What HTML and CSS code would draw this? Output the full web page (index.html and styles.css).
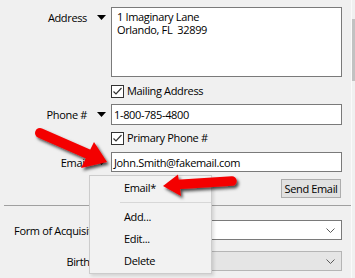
FILE: index.html
```html
<!DOCTYPE html>
<html>
<head>
<meta charset="utf-8">
<link rel="stylesheet" href="styles.css">
</head>
<body>
<div class="page">
  <div class="content">
    <div class="row row-address">
      <div class="label label-top">Address</div>
      <div class="drop drop-top"><svg class="tri" width="9" height="5" viewBox="0 0 9 5"><path d="M0 0H9L4.5 5Z"/></svg></div>
      <div class="field"><div class="textarea">1 Imaginary Lane
Orlando, FL  32899</div></div>
    </div>
    <div class="row row-check row-mailing">
      <div class="label"></div>
      <div class="drop"></div>
      <div class="field check">
        <svg class="box" width="13" height="13" viewBox="0 0 13 13"><rect x="0.5" y="0.5" width="12" height="12" fill="#fff" stroke="#333"/><path d="M2.5 6.5L5 9L10.5 3" fill="none" stroke="#333" stroke-width="1.2"/></svg>
        <span>Mailing Address</span>
      </div>
    </div>
    <div class="row row-phone">
      <div class="label">Phone #</div>
      <div class="drop"><svg class="tri" width="9" height="5" viewBox="0 0 9 5"><path d="M0 0H9L4.5 5Z"/></svg></div>
      <div class="field"><div class="input input-phone">1-800-785-4800</div></div>
    </div>
    <div class="row row-check row-primary">
      <div class="label"></div>
      <div class="drop"></div>
      <div class="field check">
        <svg class="box" width="13" height="13" viewBox="0 0 13 13"><rect x="0.5" y="0.5" width="12" height="12" fill="#fff" stroke="#333"/><path d="M2.5 6.5L5 9L10.5 3" fill="none" stroke="#333" stroke-width="1.2"/></svg>
        <span>Primary Phone #</span>
      </div>
    </div>
    <div class="row row-email">
      <div class="label">Email</div>
      <div class="drop"><svg class="tri" width="9" height="5" viewBox="0 0 9 5"><path d="M0 0H9L4.5 5Z"/></svg></div>
      <div class="field"><div class="input input-email">John.Smith@fakemail.com</div></div>
    </div>
    <div class="row row-send">
      <div class="label"></div>
      <div class="drop"></div>
      <div class="field field-end"><div class="button">Send Email</div></div>
    </div>
    <div class="separator"></div>
    <div class="row row-combo row-form">
      <div class="label label-wide">Form of Acquisition</div>
      <div class="combo">
        <svg class="chev" width="9" height="5" viewBox="0 0 9 5"><path d="M0.5 0.5L4.5 4.5L8.5 0.5" fill="none" stroke="#5a5a5a"/></svg>
      </div>
    </div>
    <div class="row row-combo row-birthday">
      <div class="label label-wide">Birthday</div>
      <div class="combo combo-disabled">
        <svg class="chev" width="9" height="5" viewBox="0 0 9 5"><path d="M0.5 0.5L4.5 4.5L8.5 0.5" fill="none" stroke="#5a5a5a"/></svg>
      </div>
    </div>
  </div>
  <div class="scrollbar"><div class="thumb"></div></div>

  <div class="menu">
    <div class="menu-item">Email*</div>
    <div class="menu-sep"></div>
    <div class="menu-item">Add...</div>
    <div class="menu-item">Edit...</div>
    <div class="menu-item">Delete</div>
  </div>

  <svg class="annot" width="355" height="278" viewBox="0 0 355 278">
    <defs>
      <filter id="sh" x="-20%" y="-20%" width="150%" height="160%">
        <feDropShadow dx="2" dy="2.5" stdDeviation="1.4" flood-color="#000" flood-opacity="0.7"/>
      </filter>
    </defs>
    <g filter="url(#sh)" fill="#f40000">
      <path d="M40 133L88 154" stroke="#f40000" stroke-width="10" stroke-linecap="round"/>
      <path d="M107 162L94 142L81 168Z"/>
      <path d="M232 181L177 184.5" stroke="#f40000" stroke-width="9.5" stroke-linecap="round"/>
      <path d="M163 186L178 174.5L181 196Z"/>
    </g>
  </svg>
</div>
</body>
</html>
```
FILE: styles.css
```css
html, body {
  margin: 0;
  padding: 0;
}
body {
  background: #f0f0f0;
  font-family: "Open Sans", "Noto Sans", sans-serif;
  font-size: 11px;
  letter-spacing: -0.35px;
  color: #000;
}
.page {
  position: relative;
  width: 355px;
  height: 278px;
  overflow: hidden;
  display: flex;
}
.content {
  width: 351px;
  flex: none;
  padding-top: 7px;
  display: flex;
  flex-direction: column;
}
.row {
  display: flex;
  align-items: center;
}
.label {
  width: 87px;
  flex: none;
  text-align: right;
  line-height: 15px;
  white-space: nowrap;
}
.label-top {
  padding-top: 3px;
}
.drop {
  width: 24px;
  flex: none;
  box-sizing: border-box;
  padding-left: 10px;
  display: flex;
  align-items: center;
}
.drop-top {
  padding-top: 8px;
}
.tri {
  display: block;
  fill: #000;
}
.field {
  width: 231px;
  flex: none;
}
.row-address {
  align-items: flex-start;
}
.textarea {
  box-sizing: border-box;
  height: 70px;
  background: #fff;
  border: 1px solid #7a7a7a;
  padding: 2px 5px;
  line-height: 13px;
  white-space: pre;
}
.row-check {
  height: 14px;
}
.row-mailing {
  margin-top: 7px;
}
.row-primary {
  margin-top: 6px;
}
.check {
  display: flex;
  align-items: center;
  gap: 3px;
  line-height: 14px;
}
.box {
  display: block;
  flex: none;
}
.row-phone {
  margin-top: 6px;
}
.input {
  box-sizing: border-box;
  background: #fff;
  border: 1px solid #7a7a7a;
  padding: 0 2px;
  display: flex;
  align-items: center;
}
.input-phone {
  height: 21px;
}
.row-email {
  margin-top: 7px;
}
.input-email {
  height: 20px;
}
.row-send {
  margin-top: 7px;
}
.field-end {
  display: flex;
  justify-content: flex-end;
}
.button {
  box-sizing: border-box;
  width: 60px;
  height: 19px;
  margin-right: 1px;
  background: #e1e1e1;
  border: 1px solid #adadad;
  display: flex;
  align-items: center;
  justify-content: center;
}
.separator {
  margin: 7px 0 0 4px;
  height: 1px;
  width: 347px;
  background: #a0a0a0;
}
.row-combo {
  gap: 4px;
}
.row-form {
  margin-top: 14px;
}
.row-birthday {
  margin-top: 11px;
}
.label-wide {
  width: 107px;
}
.combo {
  box-sizing: border-box;
  width: 231px;
  height: 20px;
  background: #fff;
  border: 1px solid #7a7a7a;
  display: flex;
  align-items: center;
  justify-content: flex-end;
  padding-right: 6px;
}
.combo-disabled {
  background: #e5e5e5;
  border-color: #b5b5b5;
}
.chev {
  display: block;
}
.scrollbar {
  width: 4px;
  flex: none;
  box-sizing: border-box;
  border-left: 1px solid #fafafa;
  background: #f0f0f0;
  padding-top: 19px;
}
.thumb {
  width: 3px;
  height: 62px;
  background: #c2c2c2;
}
.menu {
  position: absolute;
  left: 89px;
  top: 175px;
  width: 123px;
  height: 99px;
  box-sizing: border-box;
  background: #f2f2f2;
  border: 1px solid #cccccc;
  padding: 1px 0;
  box-shadow: 2px 2px 3px rgba(0, 0, 0, 0.12);
}
.menu-item {
  height: 22px;
  line-height: 22px;
  padding-left: 34px;
}
.menu-sep {
  height: 1px;
  margin: 3px 0 3px 30px;
  background: #d7d7d7;
}
.annot {
  position: absolute;
  left: 0;
  top: 0;
  pointer-events: none;
}
```
